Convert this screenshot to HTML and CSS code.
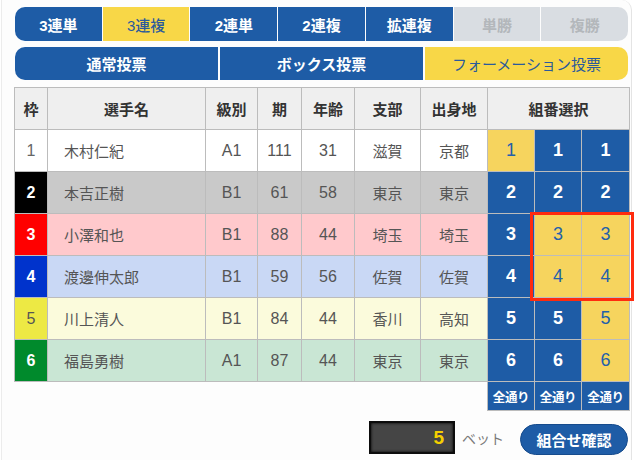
FILE: index.html
```html
<!DOCTYPE html>
<html lang="ja">
<head>
<meta charset="utf-8">
<title>組番選択</title>
<link rel="stylesheet" href="styles.css">
</head>
<body>
<div class="frame">
  <nav class="tabs bet-types">
    <span class="tab">3連単</span>
    <span class="tab on">3連複</span>
    <span class="tab">2連単</span>
    <span class="tab">2連複</span>
    <span class="tab">拡連複</span>
    <span class="tab off">単勝</span>
    <span class="tab off">複勝</span>
  </nav>
  <nav class="tabs modes">
    <span class="tab">通常投票</span>
    <span class="tab">ボックス投票</span>
    <span class="tab on">フォーメーション投票</span>
  </nav>

  <div class="board">
    <table class="entries">
      <colgroup>
        <col class="c-waku"><col class="c-name"><col class="c-cls"><col class="c-ki"><col class="c-age"><col class="c-br"><col class="c-home"><col class="c-sel"><col class="c-sel"><col class="c-sel3">
      </colgroup>
      <thead>
        <tr><th>枠</th><th>選手名</th><th>級別</th><th>期</th><th>年齢</th><th>支部</th><th>出身地</th><th colspan="3">組番選択</th></tr>
      </thead>
      <tbody>
        <tr class="r1"><td class="waku w1">1</td><td class="name">木村仁紀</td><td class="num">A1</td><td class="num">111</td><td class="num">31</td><td>滋賀</td><td>京都</td><td class="pick y">1</td><td class="pick b">1</td><td class="pick b">1</td></tr>
        <tr class="r2"><td class="waku w2">2</td><td class="name">本吉正樹</td><td class="num">B1</td><td class="num">61</td><td class="num">58</td><td>東京</td><td>東京</td><td class="pick b">2</td><td class="pick b">2</td><td class="pick b">2</td></tr>
        <tr class="r3"><td class="waku w3">3</td><td class="name">小澤和也</td><td class="num">B1</td><td class="num">88</td><td class="num">44</td><td>埼玉</td><td>埼玉</td><td class="pick b">3</td><td class="pick y">3</td><td class="pick y">3</td></tr>
        <tr class="r4"><td class="waku w4">4</td><td class="name">渡邊伸太郎</td><td class="num">B1</td><td class="num">59</td><td class="num">56</td><td>佐賀</td><td>佐賀</td><td class="pick b">4</td><td class="pick y">4</td><td class="pick y">4</td></tr>
        <tr class="r5"><td class="waku w5">5</td><td class="name">川上清人</td><td class="num">B1</td><td class="num">84</td><td class="num">44</td><td>香川</td><td>高知</td><td class="pick b">5</td><td class="pick b">5</td><td class="pick y">5</td></tr>
        <tr class="r6"><td class="waku w6">6</td><td class="name">福島勇樹</td><td class="num">A1</td><td class="num">87</td><td class="num">44</td><td>東京</td><td>東京</td><td class="pick b">6</td><td class="pick b">6</td><td class="pick y">6</td></tr>
        <tr class="all"><td class="blank" colspan="7"></td><td class="every">全通り</td><td class="every">全通り</td><td class="every">全通り</td></tr>
      </tbody>
    </table>
    <div class="mark"></div>
  </div>

  <div class="footer">
    <div class="count">5</div>
    <span class="unit">ベット</span>
    <button class="confirm">組合せ確認</button>
  </div>
</div>
</body>
</html>
```

FILE: styles.css
```css
html, body {
  margin: 0;
  padding: 0;
  background: #ffffff;
}

body {
  font-family: "Liberation Sans", "Noto Sans CJK JP", sans-serif;
  color: #555;
}

.frame {
  box-sizing: border-box;
  width: 631px;
  height: 460px;
  margin-left: 1px;
  padding: 7px 3px 0 12px;
  border-left: 1px solid #ececec;
  border-right: 1px solid #e4e4e4;
  border-top-right-radius: 10px;
  background: #fdfdfd;
}

.tabs {
  display: flex;
  gap: 1px;
  margin-left: 1px;
  border-radius: 10px;
  overflow: hidden;
}

.tab {
  flex: 1;
  display: flex;
  align-items: center;
  justify-content: center;
  background: #1e5ca6;
  color: #fff;
  font-weight: bold;
  font-size: 15px;
}

.bet-types {
  height: 34px;
}

.modes {
  height: 33px;
  margin-top: 6px;
  gap: 2px;
}

.tab.on {
  background: #f8d747;
  color: #2b5a9c;
  font-weight: normal;
}

.bet-types .tab.on {
  font-weight: 500;
}

.tab.off {
  background: #d9dde2;
  color: #b3b7bb;
}

.board {
  position: relative;
  margin-top: 7px;
}

.entries {
  width: 615px;
  table-layout: fixed;
  border-collapse: collapse;
  font-size: 15px;
}

.c-waku { width: 33px; }
.c-name { width: 158px; }
.c-cls { width: 52px; }
.c-ki { width: 44px; }
.c-age { width: 53px; }
.c-br { width: 66px; }
.c-home { width: 67px; }
.c-sel { width: 47px; }
.c-sel3 { width: 48px; }

.entries th,
.entries td {
  border: 1px solid #bcbcbc;
  text-align: center;
  padding: 0;
  height: 41px;
}

.entries th {
  background: #efefef;
  color: #333;
  font-weight: bold;
  font-size: 15px;
}

.entries td.name {
  text-align: left;
  padding-left: 16px;
}

.entries td.num {
  font-size: 16px;
}

.r1 td { background: #ffffff; }
.r2 td { background: #c9c9c9; }
.r3 td { background: #ffc9cc; }
.r4 td { background: #c9d8f5; }
.r5 td { background: #fbfbdc; }
.r6 td { background: #c9e6d4; }

.entries td.waku {
  font-size: 16px;
  color: #fff;
  font-weight: bold;
}
.r1 td.w1 { background: #ffffff; color: #666; font-weight: normal; }
.r2 td.w2 { background: #000000; }
.r3 td.w3 { background: #ff0000; }
.r4 td.w4 { background: #0033cc; }
.r5 td.w5 { background: #ede944; color: #555; font-weight: normal; }
.r6 td.w6 { background: #008a2c; }

.entries td.pick {
  font-size: 18px;
}
.entries td.pick.b {
  background: #1e5ca6;
  color: #fff;
  font-weight: bold;
}
.entries td.pick.y {
  background: #f6d45e;
  color: #2360ab;
}

.all td {
  height: 28px;
}
.entries td.blank {
  border: none;
  border-top: 1px solid #bcbcbc;
  background: transparent;
}
.entries td.every {
  background: #1e5ca6;
  color: #fff;
  font-weight: bold;
  font-size: 12.5px;
  letter-spacing: -0.3px;
}

.mark {
  position: absolute;
  left: 516px;
  top: 125px;
  width: 98px;
  height: 83px;
  border: 3px solid #ff2b0e;
}

.footer {
  display: flex;
  align-items: center;
  justify-content: flex-end;
  margin-top: 9px;
}

.count {
  box-sizing: border-box;
  width: 86px;
  height: 33px;
  background: #454545;
  border: 2px solid #0c0c0c;
  box-shadow: inset 0 0 3px #000;
  color: #f5d000;
  font-weight: bold;
  font-size: 19px;
  text-align: right;
  padding-right: 9px;
  line-height: 29px;
}

.unit {
  margin-left: 7px;
  font-size: 14px;
  color: #7a7a7a;
}

.confirm {
  margin-left: 16px;
  width: 108px;
  height: 31px;
  border-radius: 16px;
  border: 1px solid #164b8c;
  background: #1e5ca6;
  color: #fff;
  font-family: "Liberation Sans", "Noto Sans CJK JP", sans-serif;
  font-weight: bold;
  font-size: 15px;
  padding: 0;
  margin-top: 4px;
}
```
